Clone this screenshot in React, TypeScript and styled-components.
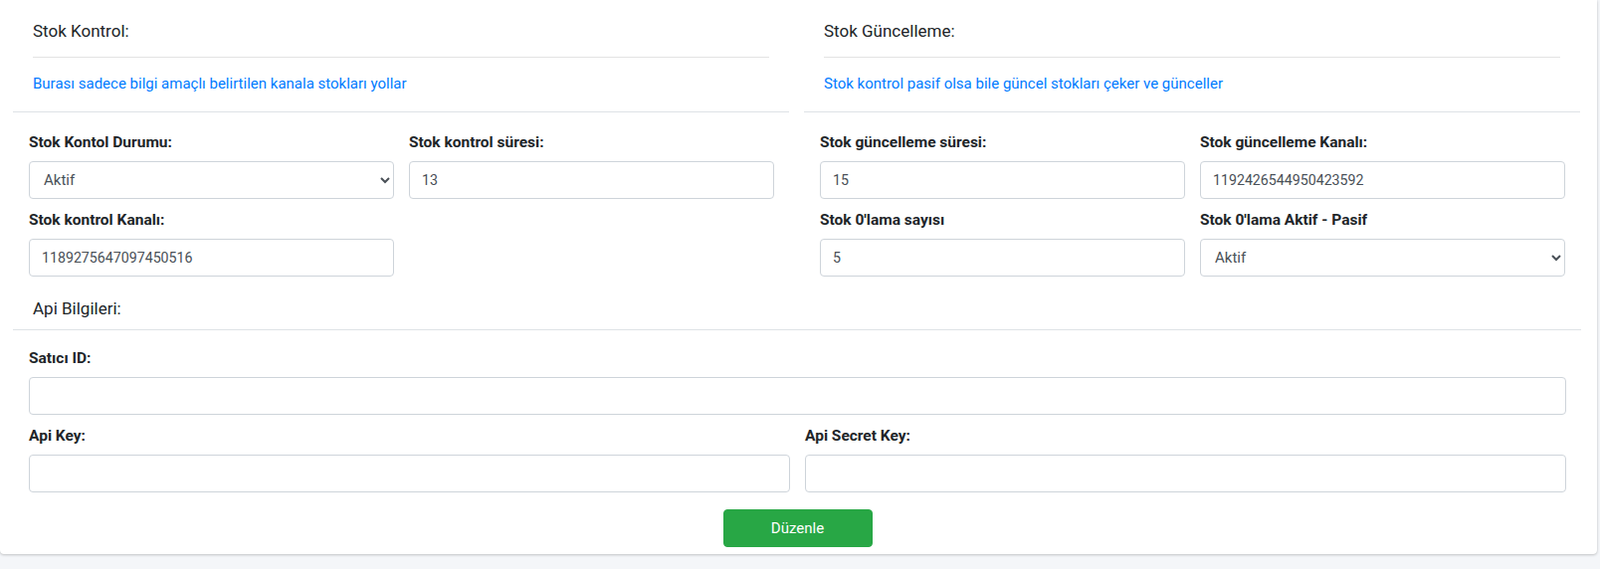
import styled, { createGlobalStyle } from "styled-components"

const GlobalStyle = createGlobalStyle`
    html, body {
        margin: 0;
        padding: 0;
        background: #f4f6f9;
        font-family: Roboto, "Liberation Sans", sans-serif;
        font-size: 15px;
        color: #212529;
    }
`

interface FieldProps {
    label: string;
    value?: string;
    select?: boolean;
}

const Field = ({ label, value = "", select }: FieldProps) => {
    return <FieldGroup>
        <Label>{label}</Label>
        {select
            ? <Select defaultValue="1">
                <option value="1">Aktif</option>
                <option value="0">Pasif</option>
            </Select>
            : <Input defaultValue={value} />}
    </FieldGroup>
}

interface SectionProps {
    title: string;
    info: string;
}

const SectionTop = ({ title, info }: SectionProps) => {
    return <>
        <TitleBox>
            <Title>{title}</Title>
        </TitleBox>
        <InfoBox>{info}</InfoBox>
    </>
}

const App = () => {
    return <Page>
        <GlobalStyle />
        <Card>
            <Columns>
                <Column>
                    <SectionTop
                        title="Stok Kontrol:"
                        info="Burası sadece bilgi amaçlı belirtilen kanala stokları yollar"
                    />
                    <FieldGrid>
                        <Field label="Stok Kontol Durumu:" select />
                        <Field label="Stok kontrol süresi:" value="13" />
                        <Field label="Stok kontrol Kanalı:" value="1189275647097450516" />
                    </FieldGrid>
                </Column>
                <Column>
                    <SectionTop
                        title="Stok Güncelleme:"
                        info="Stok kontrol pasif olsa bile güncel stokları çeker ve günceller"
                    />
                    <FieldGrid>
                        <Field label="Stok güncelleme süresi:" value="15" />
                        <Field label="Stok güncelleme Kanalı:" value="1192426544950423592" />
                        <Field label="Stok 0'lama sayısı" value="5" />
                        <Field label="Stok 0'lama Aktif - Pasif" select />
                    </FieldGrid>
                </Column>
            </Columns>
            <ApiHeader>Api Bilgileri:</ApiHeader>
            <ApiBody>
                <Field label="Satıcı ID:" />
                <ApiRow>
                    <Field label="Api Key:" />
                    <Field label="Api Secret Key:" />
                </ApiRow>
                <Footer>
                    <SubmitButton type="button">Düzenle</SubmitButton>
                </Footer>
            </ApiBody>
        </Card>
    </Page>
}

const Page = styled.div`
    padding: 0 3px 15px 0;
`

const Card = styled.div`
    width: 1605px;
    height: 557px;
    box-sizing: border-box;
    background: #fff;
    border-radius: 0 0 4px 4px;
    box-shadow: 0 0 1px rgba(0, 0, 0, 0.125), 0 1px 3px rgba(0, 0, 0, 0.2);
    padding: 0 16px 0 13px;
`

const Columns = styled.div`
    display: grid;
    grid-template-columns: 780px 780px;
    column-gap: 15px;
`

const Column = styled.div`
    display: flex;
    flex-direction: column;
`

const TitleBox = styled.div`
    margin: 0 20px;
    padding: 19px 0 14px;
    border-bottom: 1px solid #e3e3e3;
`

const Title = styled.div`
    font-size: 17px;
    line-height: 24px;
    color: #212529;
`

const InfoBox = styled.div`
    padding: 14px 20px 16px;
    line-height: 24px;
    color: #007bff;
    border-bottom: 1px solid #dee2e6;
`

const FieldGrid = styled.div`
    display: grid;
    grid-template-columns: 1fr 1fr;
    column-gap: 15px;
    row-gap: 9px;
    padding: 18px 15px 0 16px;
`

const FieldGroup = styled.div`
    display: flex;
    flex-direction: column;
    min-width: 0;
`

const Label = styled.label`
    font-size: 15.5px;
    font-weight: 700;
    line-height: 24px;
    margin-bottom: 7px;
    color: #212529;
`

const Input = styled.input`
    box-sizing: border-box;
    height: 38px;
    width: 100%;
    padding: 6px 12px;
    font-family: inherit;
    font-size: 14.2px;
    color: #495057;
    background: #fff;
    border: 1px solid #ced4da;
    border-radius: 4px;
    outline: none;
`

const Select = styled.select`
    box-sizing: border-box;
    height: 38px;
    width: 100%;
    padding: 6px 10px;
    font-family: inherit;
    font-size: 15px;
    color: #495057;
    background: #fff;
    border: 1px solid #ced4da;
    border-radius: 4px;
    outline: none;
`

const ApiHeader = styled.div`
    margin-top: 19px;
    padding: 0 20px 8px;
    font-size: 17px;
    line-height: 26px;
    border-bottom: 1px solid #dee2e6;
`

const ApiBody = styled.div`
    display: flex;
    flex-direction: column;
    row-gap: 9px;
    padding: 16px 15px 0 16px;
`

const ApiRow = styled.div`
    display: grid;
    grid-template-columns: 1fr 1fr;
    column-gap: 15px;
`

const Footer = styled.div`
    display: flex;
    justify-content: center;
    padding-top: 8px;
`

const SubmitButton = styled.button`
    width: 150px;
    height: 38px;
    background: #28a745;
    border: 1px solid #28a745;
    border-radius: 4px;
    color: #fff;
    font-family: inherit;
    font-size: 15px;
    cursor: pointer;
`

export default App
